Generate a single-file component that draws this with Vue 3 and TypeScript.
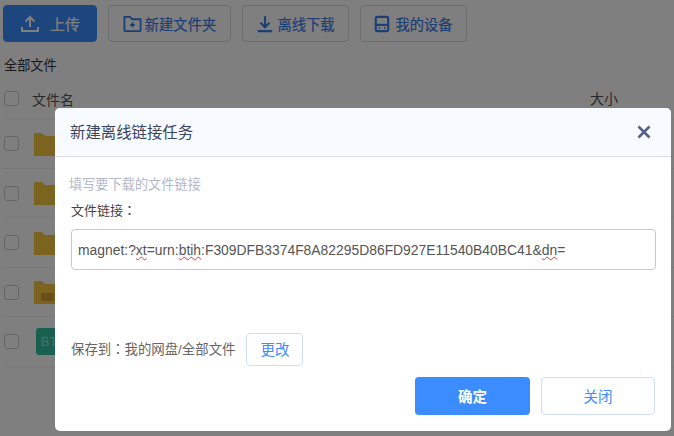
<script setup lang="ts">
const rows = [
  { kind: 'folder' },
  { kind: 'folder' },
  { kind: 'folder' },
  { kind: 'shared' },
  { kind: 'bt' },
]
</script>

<template>
  <div class="page">
    <div class="toolbar">
      <button class="tool primary">
        <svg class="ic-up" viewBox="0 0 20 20" width="20" height="20" fill="none" stroke="currentColor" stroke-width="2">
          <path d="M10 13V3M5.500 7.500 10 3l4.500 4.500M2 13v4h16v-4" />
        </svg>
        <span class="up-label">上传</span>
      </button>
      <button class="tool t-folder">
        <svg viewBox="0 0 20 20" width="19" height="19" fill="none" stroke="currentColor" stroke-width="1.900">
          <path d="M1.500 17V3h6l2 2.500h9V17a1 1 0 0 1-1 1H2.500a1 1 0 0 1-1-1zM7.500 11.500h5M10 9v5M9 5.500h9" />
        </svg>
        <span>新建文件夹</span>
      </button>
      <button class="tool t-down">
        <svg viewBox="0 0 20 20" width="18" height="18" fill="none" stroke="currentColor" stroke-width="2.400">
          <path d="M10 1.500V13M5 8.500l5 5 5-5M2 18h16" />
        </svg>
        <span>离线下载</span>
      </button>
      <button class="tool t-dev">
        <svg viewBox="0 0 18 20" width="16" height="18" fill="none" stroke="currentColor" stroke-width="2.400">
          <rect x="2" y="2" width="14" height="16" rx="1.500" />
          <path d="M2 11h14" />
          <circle cx="6" cy="14.500" r="1" fill="currentColor" stroke="none" />
          <circle cx="12" cy="14.500" r="1" fill="currentColor" stroke="none" />
        </svg>
        <span>我的设备</span>
      </button>
    </div>
    <div class="crumb">全部文件</div>
    <div class="thead">
      <span class="check"></span>
      <span class="name">文件名</span>
      <span class="size">大小</span>
    </div>
    <div v-for="(r, i) in rows" :key="i" class="row">
      <span class="check"></span>
      <span v-if="r.kind === 'bt'" class="bt">BT</span>
      <svg v-else class="folder" viewBox="0 0 24 24" width="24" height="24">
        <path d="M2 2a1 1 0 0 1 1-1h7l3 3h11v20H2z" fill="#f7c93e" />
        <rect v-if="r.kind === 'shared'" x="9" y="13" width="13" height="8" fill="#d99a2e" />
      </svg>
    </div>

    <div class="mask"></div>

    <div class="dialog">
      <div class="d-head">
        <span class="d-title">新建离线链接任务</span>
        <svg class="d-close" viewBox="0 0 14 14" width="14" height="14" fill="none" stroke="#54628a" stroke-width="2.600">
          <path d="M1.500 1.500l11 11M12.500 1.500l-11 11" />
        </svg>
      </div>
      <div class="d-body">
        <div class="hint">填写要下载的文件链接</div>
        <div class="label">文件链接<span class="colon">：</span></div>
        <div class="input">magnet:?<span class="sp">xt</span>=urn:<span class="sp">btih</span>:F309DFB3374F8A82295D86FD927E11540B40BC41&amp;<span class="sp">dn</span>=</div>
        <div class="save">
          <span class="save-text">保存到<span class="colon">：</span>我的网盘/全部文件</span>
          <button class="change">更改</button>
        </div>
        <div class="actions">
          <button class="ok">确定</button>
          <button class="cancel">关闭</button>
        </div>
      </div>
    </div>
  </div>
</template>

<style scoped>
.page {
  position: relative;
  width: 674px;
  height: 436px;
  overflow: hidden;
  background: #fff;
  font-family: "Liberation Sans", "Noto Sans CJK SC", sans-serif;
  color: #333;
  box-sizing: border-box;
  padding: 5px 0 0 3px;
}
button {
  font-family: inherit;
  box-sizing: border-box;
  cursor: pointer;
}
.toolbar {
  display: flex;
  gap: 11px;
  height: 37px;
}
.tool {
  display: flex;
  align-items: center;
  justify-content: center;
  gap: 3px;
  height: 37px;
  padding: 0;
  border: 1px solid #d5d9e0;
  border-radius: 4px;
  background: #fff;
  color: #3b7ce8;
  font-size: 14.300px;
  -webkit-text-stroke: 0.2px currentColor;
}
.primary {
  width: 94px;
  background: #3b8cff;
  border-color: #3b8cff;
  color: #fff;
  gap: 10px;
}
.up-label {
  font-size: 15px;
}
.t-folder { width: 123px; }
.t-down { width: 107px; }
.t-dev { width: 107px; gap: 5px; }
.crumb {
  margin-top: 15px;
  margin-left: 1px;
  font-size: 13.200px;
  line-height: 17px;
}
.thead {
  display: flex;
  align-items: center;
  height: 40.400px;
  margin-top: 5px;
  font-size: 14px;
  color: #555;
  border-bottom: 1px solid #eee;
  box-sizing: border-box;
}
.check {
  flex: none;
  width: 15px;
  height: 15px;
  margin-left: 1px;
  border: 1px solid #c8ccd2;
  border-radius: 3px;
  box-sizing: border-box;
}
.name {
  margin-left: 13px;
}
.size {
  margin-left: 516px;
  margin-top: -2px;
}
.row {
  display: flex;
  align-items: center;
  height: 49.500px;
  border-bottom: 1px solid #eee;
  box-sizing: border-box;
}
.folder {
  margin-left: 13px;
}
.bt {
  margin-left: 17px;
  width: 26px;
  height: 27px;
  border-radius: 3px;
  background: #33c0a0;
  color: #8fe0cd;
  font-size: 13px;
  line-height: 27px;
  text-align: center;
}
.mask {
  position: absolute;
  inset: 0;
  background: rgba(0, 0, 0, 0.5);
}
.dialog {
  position: absolute;
  left: 55px;
  top: 108px;
  width: 616px;
  height: 323px;
  background: #fff;
  border-radius: 5px;
  overflow: hidden;
  display: flex;
  flex-direction: column;
}
.d-head {
  display: flex;
  align-items: center;
  justify-content: space-between;
  flex: none;
  height: 49px;
  padding: 0 20px 0 15px;
  background: #f7faff;
  border-bottom: 1px solid #d8dfea;
  box-sizing: border-box;
}
.d-title {
  font-size: 15.400px;
  color: #3b4560;
  padding-bottom: 2px;
}
.d-body {
  flex: 1;
  padding: 19px 15px 0 14px;
  display: flex;
  flex-direction: column;
}
.hint {
  font-size: 13.200px;
  line-height: 17px;
  color: #b2b9c8;
}
.label {
  height: 17px;
  margin: 9px 0 0 2px;
  font-size: 13px;
  line-height: 17px;
  color: #444;
}
.colon {
  font-family: "Noto Sans CJK TC", sans-serif;
  line-height: 1;
}
.input {
  margin: 10px 0 0 2px;
  height: 41px;
  padding: 1px 6px 0;
  border: 1px solid #c6c8cc;
  border-radius: 4px;
  box-sizing: border-box;
  font-size: 13.880px;
  line-height: 39px;
  color: #555;
  white-space: nowrap;
}
.sp {
  text-decoration: underline wavy #e03c3c 1px;
  text-underline-offset: 1px;
}
.save {
  display: flex;
  align-items: center;
  gap: 11px;
  margin: 63px 0 0 2px;
  font-size: 13.400px;
  color: #666;
}
.save-text {
  padding-bottom: 3px;
}
.change {
  width: 57px;
  height: 33px;
  padding: 0 0 2px;
  background: #fff;
  border: 1px solid #cfe0f5;
  border-radius: 4px;
  color: #3b8cff;
  font-size: 14.500px;
}
.actions {
  display: flex;
  justify-content: flex-end;
  gap: 11px;
  margin-top: 11px;
  padding-right: 1px;
}
.ok, .cancel {
  width: 115px;
  height: 38px;
  padding: 0 0 2px;
  border-radius: 4px;
  font-size: 14.500px;
}
.ok {
  background: #3b8cff;
  border: 0;
  color: #fff;
  font-weight: 700;
}
.cancel {
  width: 114px;
  background: #fff;
  border: 1px solid #cfe0f5;
  color: #3b8cff;
}
</style>
